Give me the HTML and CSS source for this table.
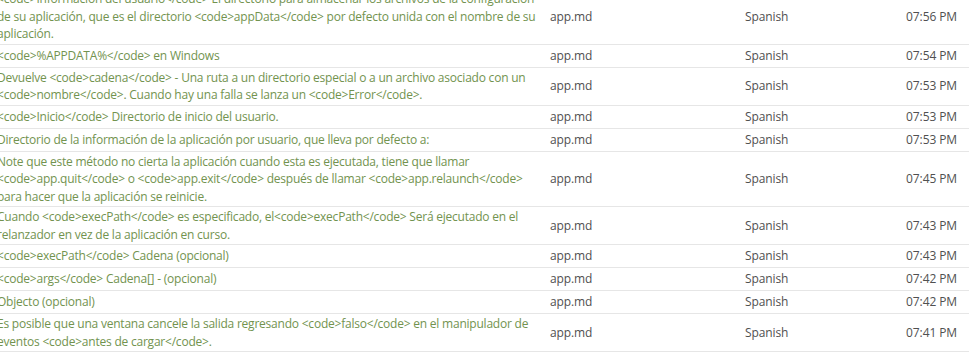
FILE: index.html
```html
<!DOCTYPE html>
<html lang="es">
<head>
<meta charset="utf-8">
<link rel="stylesheet" href="styles.css">
</head>
<body>
<table class="strings">
  <colgroup>
    <col class="c-desc"><col class="c-file"><col class="c-lang"><col class="c-time">
  </colgroup>
  <tbody>
    <tr><td class="desc">&lt;code&gt;Información del usuario&lt;/code&gt; El directorio para almacenar los archivos de la configuración de su aplicación, que es el directorio &lt;code&gt;appData&lt;/code&gt; por defecto unida con el nombre de su aplicación.</td><td class="file">app.md</td><td class="lang">Spanish</td><td class="time">07:56 PM</td></tr>
    <tr><td class="desc">&lt;code&gt;%APPDATA%&lt;/code&gt; en Windows</td><td class="file">app.md</td><td class="lang">Spanish</td><td class="time">07:54 PM</td></tr>
    <tr><td class="desc">Devuelve &lt;code&gt;cadena&lt;/code&gt; - Una ruta a un directorio especial o a un archivo asociado con un &lt;code&gt;nombre&lt;/code&gt;. Cuando hay una falla se lanza un &lt;code&gt;Error&lt;/code&gt;.</td><td class="file">app.md</td><td class="lang">Spanish</td><td class="time">07:53 PM</td></tr>
    <tr><td class="desc">&lt;code&gt;Inicio&lt;/code&gt; Directorio de inicio del usuario.</td><td class="file">app.md</td><td class="lang">Spanish</td><td class="time">07:53 PM</td></tr>
    <tr><td class="desc">Directorio de la información de la aplicación por usuario, que lleva por defecto a:</td><td class="file">app.md</td><td class="lang">Spanish</td><td class="time">07:53 PM</td></tr>
    <tr><td class="desc">Note que este método no cierta la aplicación cuando esta es ejecutada, tiene que llamar &lt;code&gt;app.quit&lt;/code&gt; o &lt;code&gt;app.exit&lt;/code&gt; después de llamar &lt;code&gt;app.relaunch&lt;/code&gt; para hacer que la aplicación se reinicie.</td><td class="file">app.md</td><td class="lang">Spanish</td><td class="time">07:45 PM</td></tr>
    <tr><td class="desc">Cuando &lt;code&gt;execPath&lt;/code&gt; es especificado, el&lt;code&gt;execPath&lt;/code&gt; Será ejecutado en el relanzador en vez de la aplicación en curso.</td><td class="file">app.md</td><td class="lang">Spanish</td><td class="time">07:43 PM</td></tr>
    <tr><td class="desc">&lt;code&gt;execPath&lt;/code&gt; Cadena (opcional)</td><td class="file">app.md</td><td class="lang">Spanish</td><td class="time">07:43 PM</td></tr>
    <tr><td class="desc">&lt;code&gt;args&lt;/code&gt; Cadena[] - (opcional)</td><td class="file">app.md</td><td class="lang">Spanish</td><td class="time">07:42 PM</td></tr>
    <tr><td class="desc">Objecto (opcional)</td><td class="file">app.md</td><td class="lang">Spanish</td><td class="time">07:42 PM</td></tr>
    <tr><td class="desc">Es posible que una ventana cancele la salida regresando &lt;code&gt;falso&lt;/code&gt; en el manipulador de eventos &lt;code&gt;antes de cargar&lt;/code&gt;.</td><td class="file">app.md</td><td class="lang">Spanish</td><td class="time">07:41 PM</td></tr>
  </tbody>
</table>
</body>
</html>
```

FILE: styles.css
```css
html, body {
  margin: 0;
  padding: 0;
  background: #ffffff;
  overflow: hidden;
}
body {
  font-family: "Open Sans", "Liberation Sans", sans-serif;
  font-size: 12px;
  letter-spacing: -0.22px;
}
.strings {
  border-collapse: collapse;
  table-layout: fixed;
  width: 972px;
  margin-left: -3px;
  margin-top: -11px;
}
.c-desc { width: 553px; }
.c-file { width: 195px; }
.c-lang { width: 120px; }
.c-time { width: 104px; }
.strings td {
  border-bottom: 1px solid #e6e6e6;
  vertical-align: middle;
  padding: 1px 0;
  line-height: 17.5px;
}
.strings .desc {
  color: #72934f;
  padding-right: 8px;
}
.strings .file,
.strings .lang,
.strings .time {
  color: #505050;
  height: 20px;
  letter-spacing: -0.1px;
}
.strings .time {
  text-align: right;
  padding-right: 12px;
}
```
